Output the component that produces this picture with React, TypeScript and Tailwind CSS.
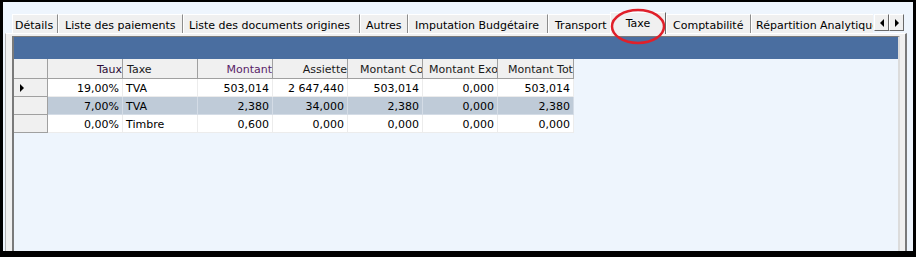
const tabs = [
  { label: "Détails", w: "w-[46px]", pl: "pl-[2px]" },
  { label: "Liste des paiements", w: "w-[125px]", pl: "pl-[6px]" },
  { label: "Liste des documents origines", w: "w-[177px]", pl: "pl-[5px]" },
  { label: "Autres", w: "w-[48px]", pl: "pl-[5px]" },
  { label: "Imputation Budgétaire", w: "w-[140px]", pl: "pl-[6px]" },
  { label: "Transport", w: "w-[64px]", pl: "pl-[6px]" },
];

const tabsAfter = [
  { label: "Comptabilité", w: "w-[85px]", pl: "pl-[6px]" },
  { label: "Répartition Analytique", w: "w-[140px]", pl: "pl-[4px]" },
];

const rows = [
  ["19,00%", "TVA", "503,014", "2 647,440", "503,014", "0,000", "503,014"],
  ["7,00%", "TVA", "2,380", "34,000", "2,380", "0,000", "2,380"],
  ["0,00%", "Timbre", "0,600", "0,000", "0,000", "0,000", "0,000"],
];

function Tab({ label, w, pl }: { label: string; w: string; pl: string }) {
  return (
    <div
      className={`${w} ${pl} shrink-0 h-[19px] mb-[1px] bg-[#f0f0f0] border-l border-l-white border-t border-t-white border-r border-r-[#8c8c8c] leading-[21px] whitespace-nowrap overflow-hidden`}
    >
      {label}
    </div>
  );
}

function ScrollButton({ dir }: { dir: "left" | "right" }) {
  return (
    <div className="w-[15px] h-[17px] bg-[#f0f0f0] border-t border-l border-t-white border-l-white border-b border-r border-b-[#696969] border-r-[#696969] flex items-center justify-center">
      {dir === "left" ? (
        <div className="w-0 h-0 border-y-[4px] border-y-transparent border-r-[4px] border-r-black" />
      ) : (
        <div className="w-0 h-0 border-y-[4px] border-y-transparent border-l-[4px] border-l-black" />
      )}
    </div>
  );
}

export default function App() {
  return (
    <div className="w-[916px] h-[257px] bg-black pt-[2px] px-[3px] pb-[6px]">
      <div className="relative h-full bg-[#eef5fd] flex flex-col font-['DejaVu_Sans',sans-serif] text-[11px] text-black">
        {/* tab strip */}
        <div className="relative z-10 pt-[9px] pl-[9px] flex items-end">
          <div className="w-[861px] h-[23px] flex items-end overflow-hidden">
            {tabs.map((t) => (
              <Tab key={t.label} {...t} />
            ))}
            <div className="-ml-[2px] w-[56px] shrink-0 h-[22px] bg-[#f0f0f0] border-l border-l-white border-t border-t-white border-r border-r-[#696969] text-center leading-[22px] z-10">
              Taxe
            </div>
            {tabsAfter.map((t) => (
              <Tab key={t.label} {...t} />
            ))}
          </div>
          <div className="ml-[1px] mb-[3px] flex">
            <ScrollButton dir="left" />
            <ScrollButton dir="right" />
          </div>
        </div>

        {/* tab page */}
        <div className="-mt-[1px] flex-1 ml-[2px] mr-[6px] bg-[#f0f0f0] border-t border-t-white border-l border-l-[#b4b4b4] border-r-[2px] border-r-[#7a7a7a] pt-[2px] pl-[6px] pr-[5px] flex flex-col">
          <div className="flex-1 bg-[#eef5fd] border-t border-t-[#7a7a7a] border-l-[2px] border-l-[#7a7a7a] border-r-[2px] border-r-[#dcdcdc] flex flex-col">
            <div className="h-[22px] bg-[#4a6ea0]" />

            {/* grid */}
            <div className="flex flex-col">
              <div className="flex h-[20px] bg-[#f0f0f0] w-[560px] border-b border-b-[#a0a0a0]">
                <div className="w-[34px] border-r border-r-[#a0a0a0]" />
                <div className="w-[75px] pt-[3px] border-r border-r-[#a0a0a0] flex items-center justify-end text-[#2e0c36] whitespace-nowrap overflow-hidden">
                  Taux
                </div>
                <div className="w-[75px] pt-[3px] border-r border-r-[#a0a0a0] flex items-center pl-[4px] text-[#1a1a1a]">
                  Taxe
                </div>
                <div className="w-[75px] pt-[3px] border-r border-r-[#a0a0a0] flex items-center justify-end text-[#581e68] whitespace-nowrap overflow-hidden">
                  Montant
                </div>
                <div className="w-[75px] pt-[3px] border-r border-r-[#a0a0a0] flex items-center justify-end text-[#1a1a1a] whitespace-nowrap overflow-hidden">
                  Assiette
                </div>
                <div className="w-[75px] pt-[3px] border-r border-r-[#a0a0a0] flex items-center pl-[12px] text-[#1a1a1a] whitespace-nowrap overflow-hidden">
                  Montant Co
                </div>
                <div className="w-[75px] pt-[3px] border-r border-r-[#a0a0a0] flex items-center pl-[6px] text-[#1a1a1a] whitespace-nowrap overflow-hidden">
                  Montant Exo
                </div>
                <div className="w-[76px] pt-[3px] border-r border-r-[#a0a0a0] flex items-center pl-[10px] text-[#1a1a1a] whitespace-nowrap overflow-hidden">
                  Montant Tot
                </div>
              </div>

              {rows.map((r, i) => (
                <div
                  key={i}
                  className={`flex h-[18px] w-[560px] ${i === 1 ? "bg-[#bfcbd8]" : "bg-white"}`}
                >
                  <div className="w-[34px] bg-[#f0f0f0] border-r border-b border-[#a0a0a0] flex items-center pl-[6px]">
                    {i === 0 && (
                      <div className="w-0 h-0 border-y-[4px] border-y-transparent border-l-[4px] border-l-black" />
                    )}
                  </div>
                  {r.map((c, j) => (
                    <div
                      key={j}
                      className={`${j === 6 ? "w-[76px]" : "w-[75px]"} pt-[3px] border-r border-b ${
                        i === 1 ? "border-[#d4dce6]" : "border-[#ececec]"
                      } flex items-center whitespace-nowrap overflow-hidden ${
                        j === 1 ? "pl-[3px]" : "justify-end pr-[3px]"
                      }`}
                    >
                      {c}
                    </div>
                  ))}
                </div>
              ))}
            </div>
          </div>
        </div>

        {/* red annotation circle */}
        <svg
          className="absolute left-[607px] top-[6px] z-20 pointer-events-none"
          width="56"
          height="37"
          viewBox="0 0 56 37"
        >
          <ellipse cx="28" cy="18.5" rx="26" ry="16.5" fill="none" stroke="#e0202a" strokeWidth="2.5" />
        </svg>
      </div>
    </div>
  );
}
